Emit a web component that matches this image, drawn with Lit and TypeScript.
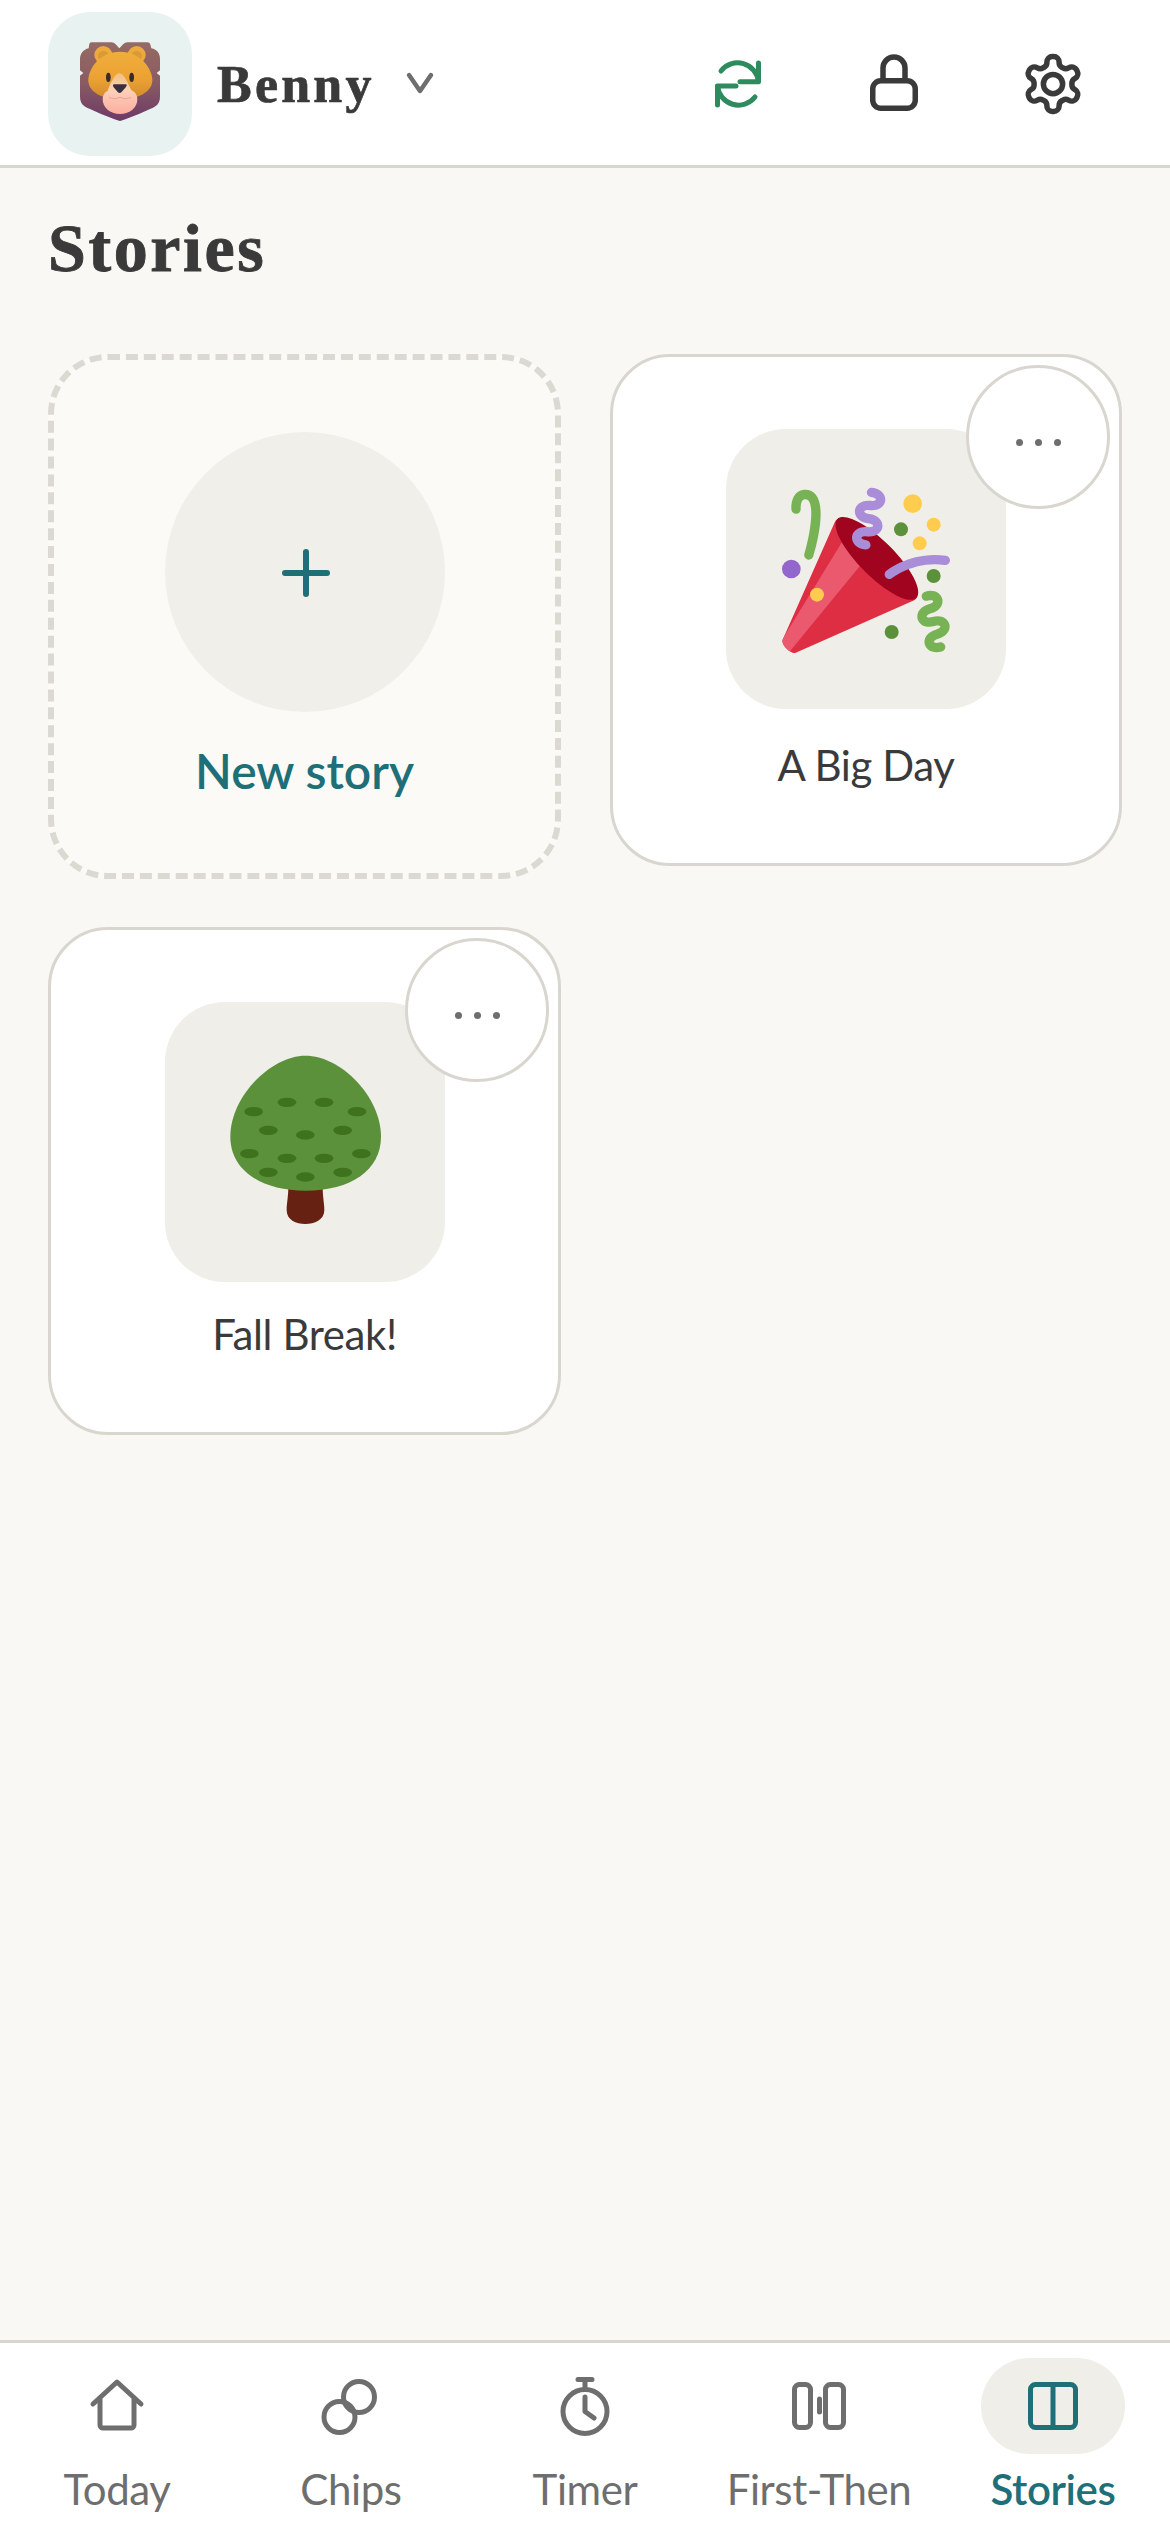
import { LitElement, html, css, svg } from "lit";
import { customElement } from "lit/decorators.js";

const party = svg`<svg class="emoji" viewBox="0 0 36 36">
<path fill="#DD2E44" d="M11.626 7.488c-.112.112-.197.247-.268.395l-.008-.008L.134 33.141l.011.011c-.208.403.14 1.223.853 1.937.713.713 1.533 1.061 1.936.853l.01.01L28.21 24.735l-.008-.009c.147-.07.282-.155.395-.269 1.562-1.562-.971-6.627-5.656-11.313-4.687-4.686-9.752-7.218-11.315-5.656z"/>
<path fill="#EA596E" d="M13 12L.416 32.506l-.282.635.011.011c-.208.403.14 1.223.853 1.937.232.232.473.408.709.557L17 17l-4-5z"/>
<path fill="#A0041E" d="M23.012 13.066c4.67 4.672 7.263 9.652 5.789 11.124-1.473 1.474-6.453-1.118-11.126-5.788-4.671-4.672-7.263-9.654-5.79-11.126 1.474-1.473 6.454 1.119 11.127 5.79z"/>
<path fill="#AA8DD8" d="M18.59 13.609c-.199.161-.459.245-.734.215-.868-.094-1.598-.396-2.109-.873-.541-.505-.808-1.183-.735-1.862.128-1.192 1.324-2.286 3.363-2.066.793.085 1.147-.17 1.159-.292.014-.121-.277-.446-1.07-.532-.868-.094-1.598-.396-2.11-.873-.541-.505-.809-1.183-.735-1.862.13-1.192 1.325-2.286 3.362-2.065.578.062.883-.057 1.012-.134.103-.063.144-.123.148-.158.012-.121-.275-.446-1.07-.532-.549-.06-.947-.552-.886-1.102.059-.549.55-.946 1.101-.886 2.037.219 2.973 1.542 2.844 2.735-.13 1.194-1.325 2.286-3.364 2.067-.578-.063-.88.057-1.01.134-.103.062-.145.123-.149.157-.013.122.276.446 1.071.532 2.037.22 2.973 1.542 2.844 2.735-.129 1.192-1.324 2.286-3.362 2.065-.578-.062-.882.058-1.012.134-.104.064-.144.124-.148.158-.013.121.276.446 1.07.532.548.06.947.553.886 1.102-.028.274-.167.511-.366.671z"/>
<path fill="#77B255" d="M30.661 22.857c1.973-.557 3.334.323 3.658 1.478.324 1.154-.378 2.615-2.35 3.17-.77.216-1.001.584-.97.701.034.118.425.312 1.193.095 1.972-.555 3.333.325 3.657 1.479.326 1.155-.378 2.614-2.351 3.17-.769.216-1.001.585-.967.702.033.117.423.311 1.192.095.53-.149 1.084.16 1.233.691.149.532-.161 1.084-.693 1.234-1.971.555-3.333-.323-3.659-1.479-.324-1.154.379-2.613 2.353-3.169.77-.217 1.002-.584.968-.702-.033-.117-.423-.312-1.192-.096-1.974.556-3.334-.322-3.659-1.479-.325-1.154.378-2.613 2.351-3.17.768-.215.999-.585.967-.701-.034-.118-.423-.312-1.192-.096-.532.15-1.083-.16-1.233-.691-.149-.53.161-1.082.693-1.232z"/>
<path fill="#AA8DD8" d="M23.001 20.16c-.294 0-.584-.129-.782-.375-.345-.432-.274-1.061.156-1.406.218-.175 5.418-4.259 12.767-3.208.547.078.927.584.849 1.131-.078.546-.58.93-1.132.848-6.493-.922-11.187 2.754-11.233 2.791-.186.148-.406.219-.625.219z"/>
<path fill="#77B255" d="M5.754 16c-.095 0-.192-.014-.288-.042-.529-.159-.829-.716-.67-1.245 1.133-3.773 2.16-9.794.898-11.364-.141-.178-.354-.353-.842-.316-.938.072-.849 2.051-.848 2.071.042.551-.372 1.031-.922 1.072-.559.034-1.031-.372-1.072-.923-.103-1.379.326-4.035 2.692-4.214 1.056-.08 1.933.287 2.552 1.057 2.371 2.951-.036 11.506-.542 13.192-.13.433-.528.712-.958.712z"/>
<circle fill="#5C913B" cx="25.5" cy="9.5" r="1.5"/><circle fill="#9266CC" cx="2" cy="18" r="2"/>
<circle fill="#5C913B" cx="32.5" cy="19.5" r="1.5"/><circle fill="#5C913B" cx="23.5" cy="31.5" r="1.5"/>
<circle fill="#FFCC4D" cx="28" cy="4" r="2"/><circle fill="#FFCC4D" cx="32.5" cy="8.5" r="1.5"/>
<circle fill="#FFCC4D" cx="29.5" cy="12.5" r="1.5"/><circle fill="#FFCC4D" cx="7.5" cy="23.5" r="1.5"/>
</svg>`;

const spots = [
  [308, 395], [408, 367], [519, 367], [618, 395], [352, 451], [463, 465], [575, 451],
  [295, 521], [408, 535], [519, 535], [631, 521], [352, 577], [463, 591], [575, 577],
];
const tree = svg`<svg class="tree" viewBox="192 216 540 540">
<path fill="#662113" d="M412 620H515C515 650 520 670 520 690C520 720 490 732 463 732C435 732 407 720 407 690C407 670 412 650 412 620Z"/>
<path fill="#5C913B" d="M463 227C570 227 690 350 690 470C690 570 600 632 463 632C330 632 238 570 238 470C238 350 360 227 463 227Z"/>
${spots.map(([x, y]) => svg`<ellipse cx=${x} cy=${y} rx="28" ry="14" fill="#3E721D"/>`)}
</svg>`;

const lion = svg`<svg class="lion" viewBox="105 102 270 270">
<defs>
<linearGradient id="mane" x1="0" y1="0" x2="0" y2="1"><stop offset="0" stop-color="#966a64"/><stop offset=".5" stop-color="#8a5c62"/><stop offset="1" stop-color="#6c3a68"/></linearGradient>
<linearGradient id="face" x1="0" y1="0" x2="0" y2="1"><stop offset="0" stop-color="#f0ae3c"/><stop offset=".55" stop-color="#eca233"/><stop offset="1" stop-color="#d08a2c"/></linearGradient>
<linearGradient id="snout" x1="0" y1="0" x2="0" y2="1"><stop offset="0" stop-color="#f3bf82"/><stop offset="1" stop-color="#fbd3b4"/></linearGradient>
<linearGradient id="muzzle" x1="0" y1="0" x2="0" y2="1"><stop offset="0" stop-color="#fcd3bb"/><stop offset="1" stop-color="#fdaea0"/></linearGradient>
</defs>
<path fill="url(#mane)" d="M148 116Q150 112 156 112H214Q222 112 227 118L238 130L250 117Q255 112 262 112H322Q330 112 332 122L334 130C352 134 360 146 360 162V196L350 204L360 212V272C360 296 352 302 330 312C300 326 265 340 240 348C215 340 180 326 150 312C128 302 120 296 120 272V212L130 204L120 196V162C120 146 130 134 146 130Z"/>
<circle cx="190" cy="150" r="27" fill="#eeaa3d"/><circle cx="190" cy="153" r="16" fill="#dc9a33"/>
<circle cx="290" cy="150" r="27" fill="#eeaa3d"/><circle cx="290" cy="153" r="16" fill="#dc9a33"/>
<path fill="url(#face)" d="M240 140C300 140 337 190 337 226C337 258 300 282 240 284C180 282 145 258 145 226C145 190 180 140 240 140Z"/>
<path fill="url(#snout)" d="M238 205C250 205 258 222 274 256H203C218 222 226 205 238 205Z"/>
<path fill="url(#muzzle)" d="M240 248C270 248 292 260 292 282C292 308 270 327 240 327C210 327 188 308 188 282C188 260 210 248 240 248Z"/>
<path fill="none" stroke="#eda394" stroke-width="3" stroke-linecap="round" d="M208 278Q224 286 240 277Q256 286 272 278"/>
<path fill="#3a2f3f" d="M222 238H258C262 238 260 244 256 248L244 262C241 265 237 265 234 262L222 248C218 244 218 238 222 238Z"/>
<ellipse cx="205" cy="217" rx="7" ry="14" fill="#3a2a2a"/><ellipse cx="275" cy="217" rx="7" ry="14" fill="#3a2a2a"/>
</svg>`;

const gearD = "M12.22 2h-.44a2 2 0 0 0-2 2v.18a2 2 0 0 1-1 1.73l-.43.25a2 2 0 0 1-2 0l-.15-.08a2 2 0 0 0-2.73.73l-.22.38a2 2 0 0 0 .73 2.73l.15.1a2 2 0 0 1 1 1.72v.51a2 2 0 0 1-1 1.74l-.15.09a2 2 0 0 0-.73 2.73l.22.38a2 2 0 0 0 2.73.73l.15-.08a2 2 0 0 1 2 0l.43.25a2 2 0 0 1 1 1.73V20a2 2 0 0 0 2 2h.44a2 2 0 0 0 2-2v-.18a2 2 0 0 1 1-1.73l.43-.25a2 2 0 0 1 2 0l.15.08a2 2 0 0 0 2.73-.73l.22-.39a2 2 0 0 0-.73-2.73l-.15-.08a2 2 0 0 1-1-1.74v-.5a2 2 0 0 1 1-1.74l.15-.09a2 2 0 0 0 .73-2.73l-.22-.38a2 2 0 0 0-2.73-.73l-.15.08a2 2 0 0 1-2 0l-.43-.25a2 2 0 0 1-1-1.73V4a2 2 0 0 0-2-2z";

const navItems = [
  { label: "Today", icon: svg`<path d="M12 34L36 12L60 34M19 28V55a3 3 0 0 0 3 3H50a3 3 0 0 0 3-3V28"/>` },
  { label: "Chips", icon: svg`<circle cx="44" cy="27" r="15.5"/><circle cx="24.5" cy="47" r="15.5"/>` },
  { label: "Timer", icon: svg`<circle cx="36" cy="41.5" r="22"/><path d="M29 9.5H43M36 9.5V19M36 27V41.5L45 48"/>` },
  { label: "First-Then", icon: svg`<rect x="11.5" y="14.5" width="16" height="43" rx="5"/><rect x="42.5" y="14.5" width="18" height="43" rx="5"/><path d="M36.5 29V42"/>` },
  { label: "Stories", active: true, icon: svg`<rect x="13.5" y="14.5" width="45" height="43" rx="5"/><path d="M36 14.5V57.5"/>` },
];

@customElement("app-root")
export class AppRoot extends LitElement {
  static styles = css`
    :host {
      display: flex; flex-direction: column; min-height: 2532px; width: 1170px;
      background: #f9f8f4; color: #3a3a3a;
      font-family: "Lato", "Open Sans", sans-serif;
    }
    svg { display: block; }
    button { all: unset; box-sizing: border-box; display: flex; }
    .top {
      height: 168px; box-sizing: border-box; background: #fff; border-bottom: 3px solid #d9d6cf;
      display: flex; align-items: center; padding: 3px 81px 0 48px;
    }
    .avatar {
      width: 144px; height: 144px; border-radius: 42px; background: #e8f3f1;
      display: flex; align-items: center; justify-content: center;
    }
    .lion { width: 90px; height: 90px; }
    .name {
      font: 700 52px "Liberation Serif", serif; letter-spacing: 3.2px; margin-left: 25px;
      -webkit-text-stroke: 0.7px #3a3a3a;
    }
    .chev { width: 36px; height: 26px; margin-left: 27px; fill: none; stroke: #6e6e6e; stroke-width: 4.5; stroke-linecap: round; stroke-linejoin: round; }
    .actions { margin-left: auto; display: flex; align-items: center; }
    .act { width: 72px; height: 72px; fill: none; stroke: #3a3a3a; stroke-width: 5.5; stroke-linecap: round; stroke-linejoin: round; }
    .act.sync { stroke: #2e8b5e; stroke-width: 5; margin-right: 84px; }
    .act.lock { margin-right: 87px; }
    .gear { display: flex; align-items: center; justify-content: center; width: 72px; height: 72px; }
    .gear svg { width: 66px; height: 66px; fill: none; stroke: #3a3a3a; stroke-width: 2; stroke-linecap: round; stroke-linejoin: round; }
    main { flex: 1; padding: 38px 48px 0; }
    h1 {
      margin: 0 0 64px; font: 700 68px/84px "Liberation Serif", serif; letter-spacing: 2.6px;
      -webkit-text-stroke: 0.9px #3a3a3a;
    }
    .grid { display: grid; grid-template-columns: 513px 512px; column-gap: 49px; row-gap: 48px; align-items: start; }
    .card {
      position: relative; box-sizing: border-box; background: #fff; border: 3px solid #d9d6cf;
      border-radius: 60px; padding: 72px 0 68px;
      display: flex; flex-direction: column; align-items: center;
    }
    .card.new { border: 6px dashed #dcd9d2; background: #fbfaf6; padding: 72px 0 72px; }
    .plus {
      width: 280px; height: 280px; border-radius: 50%; background: #f1efe9;
      display: flex; align-items: center; justify-content: center;
    }
    .plus svg { width: 60px; height: 60px; margin: 2px 0 0 2px; fill: none; stroke: #1f6f78; stroke-width: 6; stroke-linecap: round; }
    .new-label { margin-top: 29px; font-size: 48px; line-height: 60px; font-weight: 600; color: #1f6f78; }
    .tile {
      width: 280px; height: 280px; border-radius: 60px; background: #f0eee8;
      display: flex; align-items: center; justify-content: center;
    }
    .emoji { width: 168px; height: 168px; }
    .tree { width: 180px; height: 180px; }
    .label { margin-top: 26px; font-size: 42px; line-height: 60px; letter-spacing: -0.4px; color: #3a3a3a; }
    .label.tight { margin-top: 22px; }
    .more {
      position: absolute; top: 8px; right: 9px; width: 144px; height: 144px; border-radius: 50%;
      background: #fff; border: 3px solid #d9d6cf; align-items: center; justify-content: center;
      gap: 12px; padding-top: 10px;
    }
    .more i { width: 7px; height: 7px; border-radius: 50%; background: #6e6e6e; }
    nav {
      background: #fff; border-top: 3px solid #d9d6cf; height: 192px; box-sizing: border-box;
      display: grid; grid-template-columns: repeat(5, 1fr); padding-top: 15px;
    }
    .tab { display: flex; flex-direction: column; align-items: center; color: #6e6e6e; }
    .pill { width: 144px; height: 96px; border-radius: 48px; display: flex; align-items: center; justify-content: center; }
    .pill svg { width: 72px; height: 72px; fill: none; stroke: currentColor; stroke-width: 5; stroke-linecap: round; stroke-linejoin: round; }
    .tab span { font-size: 42px; line-height: 56px; margin-top: 7px; letter-spacing: -0.4px; white-space: nowrap; }
    .tab.on { color: #1f6f78; }
    .tab.on .pill { background: #f0eee8; }
    .tab.on span { font-weight: 600; }
  `;

  private story(title: string, art: unknown, tight = false) {
    return html`<div class="card">
      <div class="tile">${art}</div>
      <div class="label ${tight ? "tight" : ""}">${title}</div>
      <button class="more" aria-label="More"><i></i><i></i><i></i></button>
    </div>`;
  }

  render() {
    return html`
      <header class="top">
        <div class="avatar">${lion}</div>
        <div class="name">Benny</div>
        <svg class="chev" viewBox="0 0 36 26"><path d="M7 4L18 20L29 4"/></svg>
        <div class="actions">
          <svg class="act sync" viewBox="0 0 72 72"><path d="M19 23A21 21 0 0 1 56.5 33.7M56.5 15V33.7H38M53 49A21 21 0 0 1 15.5 38M15.5 57V38H34"/></svg>
          <svg class="act lock" viewBox="0 0 72 72"><rect x="14.75" y="32.75" width="42.5" height="27.5" rx="8"/><path d="M25 32V20a11 11 0 0 1 22 0V32"/></svg>
          <div class="gear"><svg viewBox="0 0 24 24"><path d=${gearD}/><circle cx="12" cy="12" r="3.5"/></svg></div>
        </div>
      </header>
      <main>
        <h1>Stories</h1>
        <div class="grid">
          <div class="card new">
            <div class="plus"><svg viewBox="0 0 60 60"><path d="M30 9V51M9 30H51"/></svg></div>
            <div class="new-label">New story</div>
          </div>
          ${this.story("A Big Day", party)}
          ${this.story("Fall Break!", tree, true)}
        </div>
      </main>
      <nav>
        ${navItems.map((n) => html`<div class="tab ${n.active ? "on" : ""}">
          <div class="pill"><svg viewBox="0 0 72 72">${n.icon}</svg></div>
          <span>${n.label}</span>
        </div>`)}
      </nav>
    `;
  }
}
